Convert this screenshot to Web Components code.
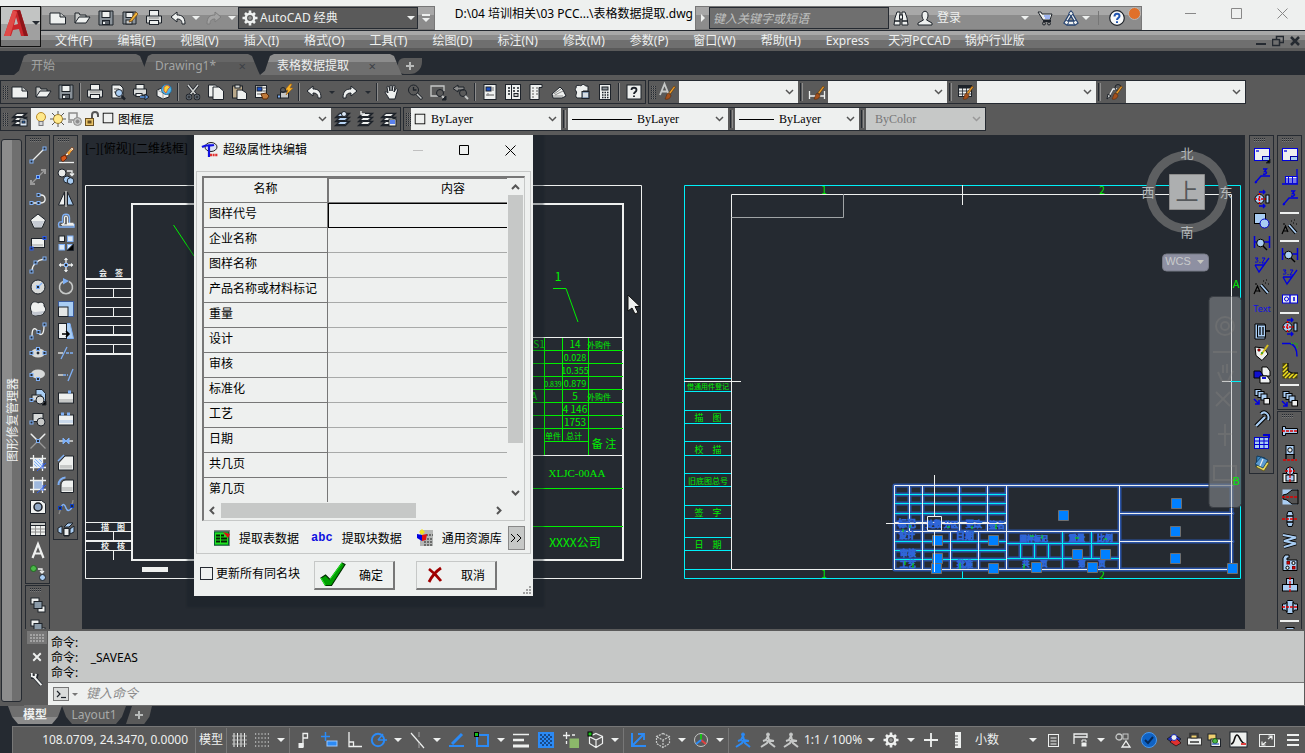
<!DOCTYPE html>
<html lang="zh-CN">
<head>
<meta charset="utf-8">
<title>表格数据提取.dwg</title>
<style>
html,body{margin:0;height:100%;overflow:hidden}
body{font:12px/16px "Noto Sans","Noto Sans CJK SC",sans-serif;color:#eef0ef;background:#5a5a5a}
</style>
</head>
<body>
<cad-app></cad-app>
<script>
const W='#eef0ef', D='#1d2229', B='#7fb0f5', S='#a9cdf3', U='#2a5cf0', R='#e00000', G='#8c8c8c';
const sq=(x,y,c=B)=>`<rect x="${x-1.5}" y="${y-1.5}" width="3" height="3" fill="#252a31" stroke="${c}"/>`;
const ln=(d,c=W,w=1.3,x='')=>`<path d="${d}" fill="none" stroke="${c}" stroke-width="${w}" ${x}/>`;
const sh=(d,f=W,s=D,w=1)=>`<path d="${d}" fill="${f}" stroke="${s}" stroke-width="${w}"/>`;
const ci=(x,y,r,f='none',s=D,w=1)=>`<circle cx="${x}" cy="${y}" r="${r}" fill="${f}" stroke="${s}" stroke-width="${w}"/>`;
const rc=(x,y,w,h,f=W,s=D)=>`<rect x="${x}" y="${y}" width="${w}" height="${h}" fill="${f}" stroke="${s}"/>`;
const brush=sh('M15.500 3l-5 7-1.500-1.500 5-6.500z','#e89a2a','#5a3208',.6)+sh('M5 15c1-1 1-4 3-6l3 2c0 3-3 5-6 4z','#a4501c','#5a2a08',.6);
const stack=ln('M5 3h8l-3 3H2zM5 7h8l-3 3H2zM5 11h8l-3 3H2z',D,2.6)+sh('M5 2.500h8l-3 3H2z')+sh('M5 6.500h8l-3 3H2z')+sh('M5 10.500h8l-3 3H2z');
const person=(c)=>ci(8,2.5,1.500,c,c)+ln('M8 4l1 4 5 1M8 4L6 8 3 9M8 8l-1 3-6 4M8 8l2 3 5 4',c,2);
const ICONS={
 new:sh('M0 3h10l5.500 4v7H0z')+sh('M10 3v4h5','#c6c8c7'),
 open:sh('M1 13V3h4l1 2h6v3','#c6c8c7')+sh('M1 13l4-6h11l-4 6z'),
 save:sh('M1 1h14v14H1z','#8a9299')+rc(4,1.5,8,6)+rc(4.500,10.500,7,4,'#5b6168')+ln('M6 12v2',W,2),
 saveas:sh('M1 2h13v12H1z','#8a9299')+rc(4,2.500,7,5)+rc(4,10,6,4,'#c6c8c7')+sh('M8 10l6-8 2 2-6 7-3 1z','#f2b63a','#7a4a10',.8),
 print:rc(3.500,.500,9,6)+sh('M.500 6h15v7H.500z','#d8dad9')+rc(3.500,10.500,9,4)+ln('M3 8h10',G,1),
 preview:sh('M2 1h8l3 3v10H2z')+ln('M4 5h5M4 8h3',G)+ci(9,9,3.500,S)+ln('M11.500 12l3.500 3.500',D,2.500),
 plot:rc(3,.500,8,5)+sh('M.500 5h13v6H.500z','#d8dad9')+rc(3,9.500,6,3)+ln('M7 13h7',D,3)+ln('M7 13h6','#5f9be8',1.500)+sh('M12 10l4 3-4 3z','#5f9be8'),
 globe:sh('M1 6l5-2 7 4v5l-6 2-6-3z')+ln('M1 6l6 3v6M7 9l6-1',G,.8)+ci(10.5,5.5,5,'#4db3e6','#2a6a96')+sh('M8 3l3-2 3 2-2 2-2 4-2-2z','#f2d43a','#e04a2a',.8),
 cut:ln('M3 1l8 10M13 1L5 11',D,3)+ln('M3 1l8 10M13 1L5 11','#d0d2d1',1.500)+ci(4,13,2,'none',D,2.500)+ci(12,13,2,'none',D,2.500)+ci(4,13,2,'none','#6f7780',1)+ci(12,13,2,'none','#6f7780',1),
 copy:sh('M.500 1h7l3 3v9H.500z')+sh('M5 3h6l4.500 4v8.500H5z'),
 paste:rc(1.500,2,10,12,'#b9a88a')+rc(4,1,5,3,'#d8dad9')+sh('M6 6h5l4.500 3v6.500H6z'),
 match:rc(1.500,1.500,11,12)+rc(3,3,5,4,'#1d4fc0')+ln('M9 4h3M9 7h3M3 10h5',G)+sh('M7 10l5-1 3 3-2 3H9z','#c07a3a','#5a2a08'),
 blockedit:rc(3.500,8,8,6,'#c6c8c7')+rc(.500,11,3,3,'#7fb0f5')+sh('M13 0L8 6h3l-2 5 7-7h-3l2-4z','#f7b42a','#a06010',.6)+ci(6,6,2.500),
 undo:sh('M7 2v3c5 0 8 2 8 9h-3c0-4-2-5-5-5v3L1 7z'),
 redo:sh('M9 2v3C4 5 1 7 1 14h3c0-4 2-5 5-5v3l6-5z'),
 redod:sh('M9 2v3C4 5 1 7 1 14h3c0-4 2-5 5-5v3l6-5z','#a3a3a3','#7d7d7d'),
 pan:sh('M5 15C4 12 1 9 1 8s2 0 3 1L3 3c0-1 1.500-1 2 0l1 4V2c0-1 2-1 2 0v5l1-5c0-1 2-1 2 0l-1 6 2-3c1-1 2 0 1.500 1L11 15z'),
 zoom:ci(6.500,6,5)+ln('M6.500 3v3h3',D)+ln('M10 10l5 5',D,3)+ln('M10 10l4.500 4.500','#c6c8c7',1.500),
 zoomwin:ln('M8 12H1V2h13v5','#c6c8c7')+ci(10,9,3.500)+ln('M12 12l3 3','#c6c8c7',2)+sh('M16 12v4h-4z',D),
 zoomprev:sh('M5 1L0 4.500 5 8V6h6V3H5z','#8c8c8c')+ci(10,9,3.500)+ln('M12 12l3 3','#c6c8c7',2),
 props:rc(2,.500,12,15)+rc(4,3,5,4,'#1d4fc0')+ln('M11 3v4M4 11h8M6 9v3',G),
 design:rc(.500,.500,6,15)+rc(6.500,.500,9,15)+ln('M3 4h2M3 7h2M3 10h2M8 4h2M12 4h2M8 7h2M12 7h2',D,1.6)+rc(9,9.500,4,3,'#c6c8c7'),
 palettes:sh('M2 .500h12v3h-3v12H2z')+ln('M4 4h2M8 4h2M4 7h2M8 7h2M4 10h2M8 10h2M4 13h2',G,1.6),
 sheets:sh('M1 10l8-7 3 3 3 6-4 2H2z')+ln('M3 10l7-5M4 11l8-4M2 12h10',G,1),
 markup:sh('M2 2c3-2 4 1 6-1s3 2 6 1v5H9v7H3c-3-3 1-4-1-7s1-2 0-5z')+rc(8,7.500,7,7,'#8aa0b8')+ln('M9 10h5M9 12h5',W),
 calc:rc(2.500,.500,11,15)+rc(5,3,6,3,'#8c9298')+ln('M5 8.500h1.500M7.500 8.500h1.500M10 8.500h1.500M5 11h1.500M7.500 11h1.500M10 11h1.500M5 13.500h1.500M7.500 13.500h1.500M10 13.500h1.500',D,1.500),
 help:rc(1,1,14,14)+ln('M5.500 6c0-3 5-3 5 0 0 2-2.500 2-2.500 4M8 11.500v1.500',D,1.800),
 textstyle:ln('M0 11L4.500 0 9 11M1.500 7.500h6','#c6c8c7',1.800)+brush,
 dimstyle:ln('M.500 7v8M15.500 7v8M1 12h14',W)+brush,
 tablestyle:rc(.500,1.500,13,11)+ln('M.500 3h13',D,3)+ln('M4.500 4v8M8.500 4v8M1 7h12M1 10h12',D,.8)+brush,
 leaderstyle:ln('M1 14l5-9h4',W)+ci(11,3.5,3)+sh('M0 15l1-5 3 2z','#c6c8c7')+brush,
 layers:stack+rc(8,8,7,7,'#dce9f7')+rc(10,10,3,2,'#2a7ae0'),
 laycur:stack.replace(/#eef0ef/g,'#b9d5f5')+ci(9,3,2.500,'#dce9f7'),
 layprev:stack+ln('M7 3H3V0',W),
 laystate:stack+rc(8,8,7,7)+ln('M9 10h5M9 12h5',U),
 bulb:ci(8,6,4.500,'#ffe98a','#b98a2a')+rc(6,10.500,4,4,'#d8dad9','#77777a'),
 sun:ln('M8 0v16M0 8h16M2 2l12 12M14 2L2 14','#555',1)+ci(8,8,4.500,'#ffe98a','#a08030'),
 vpsun:ln('M2 2h8v7H2zM5 11H1','#8c8c8c',1.500)+ci(10.500,10.500,4,'#c6c8c7',G)+ci(10.500,10.500,1.500,G,G),
 unlock:rc(1.500,7.500,8,7,'#e8c46a','#6a5020')+ln('M8 7V4c0-4 6-4 6 0v2','#555',2)+rc(4,10,3,2,'#6a5020','#6a5020'),
 swatch:rc(2.500,2.500,11,11,W,'#000'),
 gear:`<path d="M8 .500v15M.500 8h15M3 3l10 10M13 3L3 13" stroke="#eef0ef" stroke-width="2.600"/>`+ci(8,8,4.200,'#5a5a5a',W,2.500)+ci(8,8,1.200,'#5a5a5a',W,.5),
 binoc:sh('M2 8l2-6h3v13H1zM14 8l-2-6H9v13h6z')+rc(6.500,5,3,4)+ln('M1 11h6M9 11h6',D),
 user:sh('M5 5c0-5 6-5 6 0 0 3-1 4-1.500 5L15 13v2H1v-2l5.500-3C6 9 5 8 5 5z'),
 cart:sh('M1 2h3l1 2h10l-2 6H6z')+ln('M6 11h8',D,2)+ci(7,13.500,1.500)+ci(12,13.500,1.500)+ln('M7 6h6M8 8h5',U,.8),
 tri:sh('M8 1l7 12-3 2H4l-3-2zM8 6l-3 5h6z',W,'#23406e',1.300)+ci(8,3.500,2,W,'#23406e')+ci(3.500,12.500,2,W,'#23406e')+ci(12.500,12.500,2,W,'#23406e'),
 helpc:ci(8,8,7.300,'#f8f9f9',D,1.200)+ln('M5.500 6.500c0-4 5-3.500 5-.5 0 2-2.500 2-2.500 4M8 11.200v1.800','#2054b0',2),
 line:ln('M2 14L14 2')+sq(1.5,14.5)+sq(14.5,1.5),
 xline:ln('M2 14L14 2','#9a9a9a',1.300)+ln('M1 11v4h4M11 1h4v4','#9a9a9a',2)+rc(6.500,6.500,3,3,'#1040c0',B),
 pline:ln('M3 12h8c6 0 5-8 0-8H8')+sq(1.5,12)+sq(8.5,12)+sq(8.5,4),
 polygon:sh('M8 1l7.500 6-3.500 8H4L.500 7z')+sh('M2 8h12l-2.500 6h-7z','#c6cbd4','none'),
 rect:rc(1.500,3.500,13,9)+rc(2,9,11,2.500,'#c6c8c7','none')+sq(1.5,13.5,U)+sq(14.5,3,U),
 arc:ln('M2 14C2 8 7 3 14 2')+sq(1.5,14.5)+sq(5.5,5.5)+sq(14.5,1.5),
 circle:ci(8,8,7,'#d8dad9')+ln('M8 8l4-4',B)+sq(8,8),
 revcloud:sh('M2 2c2-2 5-1 6 0 3-2 7 0 6 3 3 3 1 6 0 6 0 3-5 4-6 3-3 2-7 0-6-3-2-2-2-6 0-9z')+sh('M2 10c3 2 8 0 12 0 0 4-10 6-12 3z','#c3c8d0','none'),
 spline:ln('M2 13C2 3 6 5 8 9s6 4 6-6')+sq(1.5,14.5)+sq(8.5,9)+sq(14.5,1.5),
 ellipse:`<ellipse cx="8" cy="8" rx="7" ry="4.500" fill="#d8dad9"/>`+sq(1.5,8)+sq(14.5,8)+sq(8,4)+ci(8,8,1,D),
 elarc:`<ellipse cx="8" cy="7" rx="7" ry="4.500" fill="#d8dad9"/>`+sq(1.5,8)+sq(8,12),
 insert:sh('M6 .500h6l3.500 4v8H6z',S)+rc(2,6,9,6,'#d8dad9')+ci(10,11,4,'#d8dad9')+sq(1.5,11)+sh('M16 12v4h-4z','#000'),
 block:rc(3,2.500,10,8,'#d8dad9')+ci(11,11,4,'#c6c8c7')+sq(1.5,11.5),
 point:ln('M.500 .500l15 15M15.500 .500l-15 15','#9a9a9a')+ln('M9 7l6-6M1 1l6 6',W)+sq(8,8),
 hatch:rc(3.500,3.500,9,9,'#dce9f7')+ln('M4 9l4 4M4 6l7 7M5 4l8 8M9 4l4 4',B,1)+ln('M3.500 0v16M12.500 0v16M0 3.500h16M0 12.500h16')+ln('M7 16l9-8M13 8v6',U,1),
 gradient:rc(3.500,3.500,9,9,'#9fb8dc')+ln('M3.500 0v16M12.500 0v16M0 3.500h16M0 12.500h16')+ln('M7 16l9-8M13 8v6',U,1),
 region:sh('M.500 1.500h11l4 3v10H.500z')+ci(8,8,4,'#8fa6c4',D,1.500),
 table:rc(.500,1.500,15,13)+rc(.500,1.500,15,3,'#c6c8c7')+ln('M5.500 5v9M10.500 5v9M1 8h14M1 11h14',G,1),
 mtext:ln('M2.500 15L8 1l5.500 14M5 10.500h6',W,2.2),
 addsel:ci(3.5,3.5,3,'#4ab848','#226622')+ln('M8 4h4v4M10 6l2 2 2-2',W)+ci(12.5,12.5,3,S),
 order:rc(1,1,8,6)+rc(8,9,7,6)+rc(4,4.500,8,7,'#8a9aa8'),
 erase:ln('M1 15.500h15')+sh('M7 8l7-8 2 2-7 7z','#f0f0f0','#7a3a10',.8)+sh('M9 6l6-5-4 7z','#f2a02a','none')+sh('M3 10l4-2 2 3-3 3c-2 1-3 0-3-4z','#d8581a','#5a1a08',.8),
 copyobj:ci(4,4,4,'#e8eae9')+ci(9,10.5,3.500,S)+ci(12.5,12,3.3,S)+ln('M9 2h5v4M12 4.500l2 2 2-2',W),
 mirror:sh('M6.500 1v13H.500z')+sh('M9.500 1v13h6z',S)+ln('M8 0v16',W,1),
 offset:ln('M1 14h15V11.500H11.500V5c0-5-7-5-7 0v4C2 8.500 .500 9 .500 11.500z',B,1.400)+ln('M4 12h12M3.500 12c0-1 3-1 3-2.500V5c0-2.500 3-2.500 3 0v5.500h6'),
 array:rc(1,1,5.5,5.5)+rc(9.500,1,5.5,5.5,'#dce9f7',B)+rc(1,9.500,5.5,5.5,'#dce9f7',B)+rc(9.500,9.500,5.5,5.5,'#dce9f7',B)+sh('M15.500 9v6.500H9z','#000'),
 move:sh('M8 0l3 3.500H5zM8 16l3-3.500H5zM0 8l3.500-3v6zM16 8l-3.500-3v6z',W,D,.5)+ln('M8 3v3M8 10v3M3 8h3M10 8h3')+sq(8,8),
 rotate:ln('M5 2.500a6.500 6.500 0 1 0 6 0','#c6c8c7',1.600)+sh('M5 -1l6 3-6 3.500z',B,'none'),
 scale:rc(.500,.500,15,15,S,'#3a5a9a')+rc(.500,6,9.5,9.5,'#e4e6e5'),
 stretch:sh('M8 .500h4l3.500 15H8z',S,B)+rc(.500,.500,8,15)+ln('M4 11h7M8 8l3 3-3 3','#000',1.500),
 trim:ln('M0 8h5',W)+ln('M8 8h8',B,1.300,'stroke-dasharray="3 1"')+ln('M3 14L9 2',B),
 extend:ln('M0 8h5',W)+ln('M5 8h5',B,1.300,'stroke-dasharray="3 1"')+ln('M10 14l5-12',B),
 brkpt:rc(.5,4,15,10)+rc(1,10,14,3,'#c6c8c7','none')+rc(10,1.500,3,3,B,'none'),
 brk:rc(.5,4,15,10)+rc(1,9,14,3,'#c9d8ea','none')+rc(3,1.500,3,3,B,'none')+rc(9,1.500,3,3,B,'none'),
 join:ln('M1 8h14')+sh('M5 5l3 3-3 3zM11 5L8 8l3 3z',B,B),
 chamfer:sh('M7 1h8.500v14H.500V8z')+rc(2,10,12,3.500,'#c6c8c7','none')+ln('M0 6l6-6',B,1.500),
 fillet:sh('M8 3h7.500v12.500H3V9c0-4 2-6 5-6z')+rc(4,10,10.500,4,'#c6c8c7','none')+ln('M.500 8c0-4 3-7.500 7-7.500',B,2),
 blend:ln('M1 15c1-3 1-4 2-5M15 1c0 3-1 4-2 6',G,1.300)+ln('M3 9c2-6 4-3 5 0s4 4 6-1',B,1.500)+sq(2,9,'#1040c0')+sq(14,7,'#1040c0'),
 explode:sh('M0 7l4-2v8l-4-2zM6 6l4-4h5l-4 4zM6 8h5v7H6zM12 8l4-3v6l-4 2z',S)+rc(6,7.500,5,7),
 rsheet:rc(.500,1.500,15,12,W,'#0000e0')+rc(8.500,9.500,7,4,S,'#0000a0')+ln('M2 4h3','#0000e0')+sh('M16 12v4h-4z','#000'),
 rsheet2:rc(.500,1.500,15,12,W,'#0000e0')+rc(8.500,9.500,7,4,S,'#0000a0')+ln('M2 4h3','#0000e0'),
 rtable:ln('M15 0v15M0 15h16',"#0000e0",1.300)+rc(3.500,7.5,11.5,6.5,W,'#0000e0')+ln('M3 10h12M3 12h12M6.500 8v6M10.500 8v6','#0000e0',1),
 rleader:ln('M1 14l6-7h9M9 0h3.500l-2 2.500c3.500 0 2 3.500-1.500 2.500','#0000e0',1.400)+ci(2,13,1.200,'#0000e0','none'),
 wheels:ci(5.500,8,4.5,S,'#000',1)+ln('M5.500 2v12M1 8h14',R,1.5,'stroke-dasharray="2 1"')+rc(12,4,3,8,S,'#000')+ln('M5 1h5M5 15h5M9 -1l2 2-2 2M9 13l2 2-2 2',"#0000e0",1.300),
 shapes:rc(.500,.500,11,10,S,'#000')+ci(10.500,10.500,4.5,S,'#0000c0'),
 dimmag:ln('M.500 1v12M15.500 1v12M1 7h14','#0000e0',1.500)+ci(6.500,8,3.800,S,'#000')+ln('M9 11l4 4','#000',1.500),
 rough:ln('M1 8h9l5-7M1 8l4 7 5-7','#0000e0',1.300)+ln('M1 1h3l-1.500 2c3 0 1.500 3-1.500 2M6 5v1M8 1h3l-3 5h3','#0000e0',1),
 wand:ln('M7 6l7 8','#000',3.500)+ln('M7 6l7 8',S,1.800)+ln('M0 15l3.500-8 2.500 6M1 12h4M9 2h1M12 1h1M14 5h1M11 4h1M1 5h2','#000',1.200),
 rtext:'<text x="8" y="11" font-size="9" text-anchor="middle" fill="#1010e0">Text</text>',
 beam:sh('M1 1h10v3H6v9h5v3H1z',S,'#000')+rc(3.500,2,8,12,S,'#000')+ln('M6 4v8M9 4v8M11 8h5','#000',1.300),
 paint:sh('M1 2l9 1 4 6-6 6.500-6-5z',W,'#000')+ln('M7 10l7-10','#d8c020',2)+ci(5,5,1.300,R,'#000',.5)+ci(8,8,1,'#20a020','none'),
 blocks:sh('M8 0h5l3 4v5H8z',W,'#000')+sh('M0 4h6l3 4v3H0z','#1010d0','#000')+sh('M6 9h7l3 4v3H6z',W,'#000')+ln('M8 11h4',"#1010d0",2),
 cascade:rc(1,.500,6,6,S,'#000')+rc(4,2.500,6,6,S,'#000')+rc(7,5,6,6,S,'#000')+rc(10,9.500,5.5,5.5,W,'#000')+ln('M0 10l5 5M5 11v4H1','#0000e0',1.500),
 wrench:ln('M2 15l9-9','#000',4.5)+ln('M2 15l9-9',S,2.300)+ln('M7 3c4-4 9 1 7 6','#000',4)+ln('M7 3c4-4 9 1 7 6',S,2),
 rgrid:rc(.500,4.500,14,11,S,'#0000d0')+ln('M5.500 4v11M10 4v11M1 8h13M1 11.500h13','#0000d0',1)+ln('M9 2h6v3','#0000d0',2),
 book:sh('M3 1l8 2v11L2 12z','#3a86c0','#123a5a')+sh('M8 5l7 3-5 8-8-4z','#e8d860','#5a5210',.8)+sh('M7 2l7 3-5 8-8-4z','#5a9ad0','#123a5a',.8)+ln('M9 4l-3 7',W,1.2),
 tol:rc(.5,4,15,8,W,'#0000e0')+ln('M8 4v8M12 6v4','#0000e0',1.500)+ci(4.500,8,2,'none','#0000e0'),
 corner:ln('M0 2.500h8c4 1 7 4 7 13','#0000e0',1.400)+ln('M9 2.500h6v6','#18b018',1.300,'stroke-dasharray="1.500 1.500"'),
 hatchcor:sh('M.500 0h5v10h10v5.500h-15z','#4a4410','none')+ln('M1 5l4-4M1 9l5-5M1 13l5-5M3 15l5-5M7 15l5-5M11 15l4-4','#f0e020',1.600)+ln('M6 0v8l4 2h6','#000',1),
 bolt:sh('M.500 3.500h3v2h12v5h-12v2h-3z',S,'#000')+ln('M0 8h16',R,1.3,'stroke-dasharray="3 1"'),
 p1:rc(4,.500,8,9,S,'#000')+ci(8,5,2.2,W,'#000')+ln('M4 9v5M12 9v5','#000',1.300)+ln('M1 15h14',R,1.3,'stroke-dasharray="3 1"'),
 p2:rc(1,6.5,14,9,W,'#000')+rc(4,8,8,6,S,'#000')+ci(8,4,4,S,'#000')+ln('M8 0v16M3 4h10',R,1.3,'stroke-dasharray="3 1"'),
 p3:rc(.500,.500,15,15,S,'none')+sh('M5 5l5-4h6v14h-6l-5-4-4-1V6z','#555','#000')+ln('M0 8h16',R,1.3,'stroke-dasharray="3 1"'),
 p4:sh('M6 .500h4l1 3v9l-1 3H6l-1-3v-9z',S,'#000')+ln('M5 5h6M5 11h6','#000')+ln('M0 8h16',R,1.3,'stroke-dasharray="3 1"'),
 p5:ln('M1 2l13 2.500L2 8l12 2.500L2 14','#000',3.800)+ln('M1 2l13 2.500L2 8l12 2.500L2 14',S,2),
 p6:sh('M1 15.500V3l2-3h4v3H5v2h10v10.500z',S,'#000')+rc(5,6.500,2.5,2.5,R,'#800')+rc(10.500,11.500,2.5,2.5,R,'#800')+ci(11.500,8,1.600,W,'#000')+ci(5.500,12.800,1.600,W,'#000'),
 p7:rc(4.500,1.500,7,6,S,'#000')+rc(.500,7.500,15,6.5,S,'#000')+ln('M8 0v16',R,1.3,'stroke-dasharray="3 1"'),
 p8:sh('M.500 5h3l2-3.500h5l2 3.500h3v6h-3l-2 3.500h-5L3.500 11h-3z',S,'#000')+ln('M5 3v10M11 3v10','#000')+ln('M0 8h16',R,1.3,'stroke-dasharray="3 1"'),
 x:ln('M3 3l10 10M13 3L3 13',W,2.500), spanner:ln('M4 5l9 10',D,4)+ln('M2 2l1 4 4 0 1-4',D,4)+ln('M4 5l9 10',W,2.500)+ln('M2 1l0 4 4 1 1-4',W,2),
 prompt:rc(.500,1.500,15,13,'#dadcdb','#777')+ln('M4 5l3 3-3 3',D,1.2)+ln('M8 11.500h5',D,1.2),
 sgrid:ln('M3 1v14M6.500 1v14M10 1v14M13.500 1v14',W,1)+ln('M1 4h15M1 8h15M1 12h15','#c6c8c7',.8),
 sdots:ln('M1 2h15M1 6h15M1 10h15M1 14h15',W,1.200,'stroke-dasharray="1.200 2"'),
 infer:ln('M7 15V1.500h4.500V6H7',W,1.300)+rc(3,11.500,4,4,W,W),
 dyn:rc(6,9,10,5,'#2b8af5','#9cc8ff')+ln('M4.500 0v9M0 4.500h9','#2b8af5',1.500),
 ortho:ln('M3 0v14.500h13M3 10h4.500v4.500',W,1.300), polar:ci(7,8,6.2,'none','#2b8af5',2)+ln('M7 8h9M7 8l5-6','#2b8af5',1.500),
 iso:ln('M1 1l13 15',W,1.200)+ln('M9 0v5M9 11v5','#9a9a9a',1.200), otrack:ln('M0 14h15',"#2b8af5",2)+ln('M3 12L13 2',"#2b8af5",3),
 osnap:rc(3,3,11,11,'none','#2b8af5')+ln('M3 3h11v11H3z','#2b8af5',2)+rc(.500,.500,4,4,'#18c018','#000'),
 lwt:ln('M0 2.500h16',W,1.500)+ln('M0 8h11',W,2.500)+ln('M0 14h16',W,3), trans:rc(.500,.500,15,15,'#2b8af5','#2b8af5')+ln('M2 3h12M2 7h12M2 11h12','#174a8a',2,'stroke-dasharray="2 2"')+ln('M4 5h12M4 9h12M4 13h12','#174a8a',2,'stroke-dasharray="2 2"'),
 selc:rc(7,7,8.5,8.5,'#8cb86a','#8cb86a')+ln('M3.500 0v7M0 3.500h7M9 3h3M3.500 9v3',W,1.300),
 cube:ln('M8 1.500l6.500 3v7l-6.500 4-6.500-4v-7zM2 5l6 3 6-3M8 8v7',W,1.200)+rc(0,0,4,4,'#18c018','#000'),
 cube2:ln('M8 1.500l6.500 3v7l-6.500 4-6.500-4v-7zM2 5l6 3 6-3M8 8v7','#c6c8c7',1.200,'stroke-dasharray="2 1"'),
 ucs:ln('M2 1v13h14M2 14L13 3','#2b8af5',2)+ln('M8 2h6v6','#2b8af5',1.800), giz:ci(8,8,6.500,'none','#c6c8c7')+ln('M8 8V2',"#18c018",2)+ln('M8 8l5 4','#e04040',2)+ln('M8 8l-5 4','#2b8af5',2),
 annb:person('#2b8af5'), ann:person('#c6c8c7'),
 plus:ln('M8 1v14M1 8h14',W,1.800), ruler:rc(5.500,.500,5,15,W,W)+ln('M5 4h3M5 7h3M5 10h3M5 13h3','#5a5a5a',1),
 quick:rc(2.500,2.500,10,12,'none',W)+ln('M4.500 6h6M4.500 9h6M4.500 12h6',W,1), lockui:ln('M1 12V2h13v4M1 5h13',W,1.300)+rc(8,10,6,5,W,'#5a5a5a')+ln('M9 10V8h4v2',W,1),
 isol:ci(5,5,3,'none','#c6c8c7',1.300)+rc(9,2,5,5,'none','#c6c8c7')+ln('M8 15l4-6 4 6z',W,1.3), perf:ci(8,8,7.5,'#0f62c4','#4a9af0')+ln('M4 8l3 3 5-6','#052a5a',2),
 db:sh('M1 7l7-5 7 5-7 5z','#2030c0',D)+sh('M4 10l6 4 5-3-6-6z','#e03030','#000',.6)+ci(8,5.5,3,W,'#2030c0'),
 db2:rc(.500,6,14,7,W,'#333')+ln('M3 6V1.500h8V6M3 10h9','#333',1.500)+rc(4,3,6,3,'#f0d070','#333'),
 db3:rc(2,2,8,6,'#f0d070',D)+rc(5,7,9.5,7.5,W,D)+ci(9,9,2.5,'#4ab848','#206010')+ln('M6 12h7','#3060c0'),
 wave:rc(0,0,17,15,W,D)+ln('M1 12c4 0 3-9 6-9s3 9 9 9','#111',1.600)+ln('M11 12h5','#e04040',2),
 clean:rc(.500,2.500,15,12,'none',W)+ln('M9 7l4-3M9.500 4h3.500v3.500M7 10l-4 3M3 9.500v3.500h3.500',W,1.200), menu:ln('M2 3h12M2 8h12M2 13h12',W,2),
 logo:'<ellipse cx="9" cy="5" rx="6" ry="4.500" fill="#d8e0f4" stroke="#222"/><path d="M0 5c5-3 8-1 12-2M7 4v11" stroke="#1010e0" stroke-width="2.200" fill="none"/><path d="M8 13h8" stroke="#e03030" stroke-width="2.500" stroke-dasharray="2 .6"/>',
 xtab:rc(0,0,16,16,'#888','none')+rc(.500,2,14,13,'#20e020','#063')+ln('M2 5.500h4M7 5.500h3M2 8.500h4M7 8.500h6M2 11.500h4M7 11.500h6','#042004',2)+sh('M9 2l7 2-2 4z','#e01010','none'),
 lib:rc(3,0,13,16,'#b4b6b5','none')+ln('M9 5h7M7 9h9M7 12h9M7 15h9','#222',1.200,'stroke-dasharray="2 1"')+sh('M0 4l5 1v6l-5-3z','#0000e0','none')+sh('M5 5l5-1-1 6-4 1z','#e01010','none')+sh('M2 2l3-3 3 3-3 3z','#f0e020','none'),
 ok:sh('M0 10l3-2 3 3L14 0l2 1L7 15H3z','#00a000','#003000',.8)+ln('M0 10l3 5M6 11L14 0','#20f020',.8),
 no:ln('M2 2c4 3 9 8 12 12M14 1C8 5 5 9 2 15','#a00000',2.800)
};
const svg=(n,s=16)=>`<svg class="i" width="${s}" height="${s}" viewBox="0 0 16 16" aria-hidden="true" overflow="visible">${ICONS[n]||''}</svg>`;
const BASE=`*{box-sizing:border-box}button{font:inherit;color:inherit;background:none;border:0;padding:0;margin:0}svg{display:block;flex:none}a{color:inherit;text-decoration:none}.car{width:0;height:0;border:4px solid transparent;border-top-color:#eef0ef;border-bottom:0}`;
const define=(tag,fn)=>customElements.define(tag,class extends HTMLElement{
  connectedCallback(){if(this.shadowRoot)return;const r=this.attachShadow({mode:'open'});const t=document.createElement('template');const [css,html]=fn(this);t.innerHTML=`<style>${BASE}${css}</style>${html}`;r.append(t.content.cloneNode(true));}
});

/* Strip of icon buttons: "|" divider, "v" menu arrow */
const strip=(list)=>(list||'').trim().split(/\s+/).filter(Boolean).map(n=>n=='|'?'<hr>':n=='v'?'<button class="v" aria-label="v"><span class="car"></span></button>':`<button aria-label="${n}">${svg(n)}</button>`).join('');
define('tool-bar',el=>[`
:host{display:flex;height:24px;border:1px solid #252a31;background:#5a5a5a;align-items:stretch;flex:none}
.grip{width:5px;margin:4px 0 4px 2px;background:repeating-linear-gradient(#5a5a5a 0 1px,transparent 1px 2px),repeating-linear-gradient(90deg,#252a31 0 1px,#777 1px 2px);flex:none}
button{width:23px;display:grid;place-items:center}.v{width:13px}.v .car{border-width:3px;border-bottom:0;border-top-color:#252a31}
hr{margin:2px 2px;border:0;width:2px;border-left:1px solid #252a31;border-right:1px solid #8c8c8c}`,
`<span class="grip"></span>${strip(el.getAttribute('icons'))}<slot></slot>`]);

define('tool-column',el=>[`
:host{display:flex;flex-direction:column;width:25px;border:1px solid #252a31;background:#5a5a5a;gap:2px;align-items:stretch;flex:none}
.grip{height:4px;margin:2px 7px 1px 3px;background:repeating-linear-gradient(90deg,#5a5a5a 0 1px,transparent 1px 2px),repeating-linear-gradient(#252a31 0 1px,#777 1px 2px);flex:none}
button{height:20px;display:grid;place-items:center;flex:none}hr{border:0;height:2px;background:#eef0ef;margin:1px 2px;flex:none}`,
`<span class="grip"></span>${strip(el.getAttribute('icons'))}`]);

define('style-select',el=>[`
:host{display:grid;width:var(--w);background:#eef0ef;color:#000;font-family:"Liberation Serif",serif;flex:none;align-items:center}
:host([disabled]){background:#c6c8c7;color:#777}
:host([sans]){font-family:"Noto Sans CJK SC",sans-serif}
select{grid-area:1/1;appearance:none;border:0;background:none;font:inherit;font-size:12px;color:inherit;width:100%;height:100%;padding:0 0 0 var(--p,8px);opacity:1}
.c{grid-area:1/1;justify-self:end;margin-right:4px;pointer-events:none}
.pre{grid-area:1/1;justify-self:start;display:flex;gap:1px;padding-left:2px;pointer-events:none}
.ln{height:1px;background:#000;margin-left:2px}`,
`<select aria-label="样式"${el.hasAttribute('disabled')?' disabled':''}><option>${el.getAttribute('value')||''}</option></select>
<span class="pre">${(el.getAttribute('icons')||'').split(' ').filter(Boolean).map(n=>n=='line'?`<span class="ln" style="width:${el.getAttribute('line')}px"></span>`:svg(n,n=='swatch'?14:16)).join('')}</span>
<svg class="c" width="9" height="6" viewBox="0 0 9 6"><path d="M1 1l3.500 3.500L8 1" fill="none" stroke="${el.hasAttribute('disabled')?'#999':'#555'}" stroke-width="1.500"/></svg>`]);

define('title-bar',()=>[`
:host{display:flex;height:30px;padding-left:41px;background:#eef0ef;color:#000;align-items:flex-start}
.band{display:flex;align-items:center;height:24px;margin-top:6px;border:1px solid #777;background:linear-gradient(#a8a8a8 8px,#8c8c8c 8px)}
.qat{width:394px;padding-left:4px;flex:none}.qat>button{width:24px;display:grid;place-items:center}.qat>.v{width:12px}
.ws{display:flex;align-items:center;width:180px;height:22px;background:#5a5a5a;border:1px solid #252a31;color:#eef0ef;padding:0 2px 0 3px;gap:2px;flex:none}
.ws select{flex:1;font:inherit;color:inherit;background:none;border:0;appearance:none;padding:0}
.qat>.more{width:15px;gap:2px}.more:before{content:"";width:8px;height:2px;background:#eef0ef}
h1{flex:1;min-width:0;margin:5px 2px 0 0;text-align:right;font:inherit;line-height:18px;white-space:nowrap}
.srch{width:447px;flex:none}.srch>button{display:grid;place-items:center}
.srch>.tri{width:13px}.tri:before{content:"";border:4px solid transparent;border-left-color:#eef0ef;border-right:0}
input{width:180px;height:22px;background:#6f6f6f;border:1px solid #252a31;color:#eef0ef;font:italic 12px/16px "Noto Sans CJK SC",sans-serif;padding:0 3px 2px}
input::placeholder{color:#c0c2c1;opacity:1}
.win{display:flex;width:163px;padding-left:26px;flex:none}.win button{width:46px;height:26px;display:grid;place-items:center}
.dot{width:13px;height:13px;border-radius:50%;background:#e0702a;border:1px solid #b8b8b8;align-self:flex-start;margin-left:1px}
.srch>.login{color:#eef0ef;width:84px;justify-items:start}.sep{width:1px;height:14px;background:#777;margin:0 8px}`,
`<div class="band qat">${['new','open','save','saveas','print','undo'].map(n=>`<button aria-label="${n}">${svg(n)}</button>`).join('')}<button class="v" aria-label="v"><span class="car"></span></button><button aria-label="redo">${svg('redod')}</button><button class="v" aria-label="v"><span class="car"></span></button>
<label class="ws">${svg('gear')}<select aria-label="工作空间"><option>AutoCAD 经典</option></select><span class="car"></span></label><button class="more" aria-label="more"><span class="car"></span></button></div>
<h1>D:\\04 培训相关\\03 PCC...\\表格数据提取.dwg</h1>
<div class="band srch"><button class="tri" aria-label="search"></button><input placeholder="键入关键字或短语" aria-label="搜索"><button style="width:24px" aria-label="find">${svg('binoc')}</button><button style="width:24px" aria-label="user">${svg('user')}</button><button class="login">登录</button><button style="width:8px" aria-label="v"><span class="car"></span></button><button style="width:32px" aria-label="cart">${svg('cart')}</button><button style="width:20px" aria-label="a360">${svg('tri')}</button><button style="width:9px" aria-label="v"><span class="car"></span></button><span class="sep"></span><button style="width:20px" aria-label="help">${svg('helpc')}</button><span class="dot"></span></div>
<div class="win"><button aria-label="最小化"><svg width="11" height="11"><path d="M0 5.500h11" stroke="#888"/></svg></button><button aria-label="最大化"><svg width="11" height="11"><path d="M.5.5h10v10H.5z" fill="none" stroke="#888"/></svg></button><button aria-label="关闭"><svg width="11" height="11"><path d="M.5.500l10 10M10.500.500l-10 10" stroke="#888"/></svg></button></div>`]);

define('menu-bar',()=>[`
:host{display:flex;height:21px;border-top:1px solid #252a31;padding-left:42px;background:linear-gradient(#a8a8a8 4px,#8c8c8c 4px 9px,#6f6f6f 9px 17px,#5a5a5a 17px);align-items:stretch}
nav{display:flex;flex:1}nav a{padding:0 12px 0 13px;line-height:20px;white-space:nowrap}nav a.ext{padding:0 7px}
.w{display:flex;gap:6px;align-items:center;padding-right:5px}`,
`<nav>${['文件(F)','编辑(E)','视图(V)','插入(I)','格式(O)','工具(T)','绘图(D)','标注(N)','修改(M)','参数(P)','窗口(W)','帮助(H)','Express'].map(t=>`<a href="#">${t}</a>`).join('')}<a class="ext" href="#">天河PCCAD</a><a class="ext" href="#">锅炉行业版</a></nav>
<span class="w"><button aria-label="最小化"><svg width="10" height="12"><path d="M0 9h10" stroke="#252a31" stroke-width="2"/></svg></button><button aria-label="还原"><svg width="12" height="12"><path d="M4.500 4V1.500h7v6H8M.5 4.500h7v6h-7z" fill="none" stroke="#252a31" stroke-width="1.500"/></svg></button><button aria-label="关闭"><svg width="10" height="12"><path d="M1 2l8 8M9 2l-8 8" stroke="#252a31" stroke-width="2.500"/></svg></button></span>`]);

define('app-button',()=>[`
:host{position:absolute;left:0;top:6px;width:41px;height:41px}
button{display:flex;width:41px;height:41px;border:1px solid #111;background:linear-gradient(#c2c4c3 17px,#a0a0a0 17px 33px,#777 33px);align-items:center;padding:0 2px 8px 3px;gap:2px}.car{border-top-color:#252a31}`,
`<button aria-label="A"><svg width="26" height="28" viewBox="0 0 26 28"><path d="M9 1h7l8 26h-7l-2-7-6 1-2 6H0z" fill="#c9252b"/><path d="M12 8l2 7-4 1z" fill="#b8bab9"/><path d="M9 1l4 2-7 24H0z" fill="#e04a48"/><path d="M13 2l3-1 8 26h-4z" fill="#8e1519"/></svg><span class="car"></span></button>`]);

define('file-tabs',()=>[`
:host{display:flex;height:24px;background:#252a31;padding:3px 0 0 14px;align-items:stretch}
.t{display:flex;align-items:center;justify-content:space-between;padding:2px 10px 0 17px;background:linear-gradient(#666 8px,#5a5a5a 8px);color:#a3a5a4;clip-path:polygon(0 100%,5px 80%,10px 10%,14px 0,calc(100% - 12px) 0,calc(100% - 8px) 10%,calc(100% - 2px) 80%,100% 100%);flex:none}
.t.on{background:linear-gradient(#8c8c8c 8px,#6f6f6f 8px);color:#eef0ef;padding-right:22px}
.x{color:#3c4046;font-size:13px;margin-right:4px}
.add{width:24px;height:16px;margin:4px 0 0 -4px;border-radius:6px 0 12px 6px;background:#5a5a5a;display:grid;place-items:center}`,
`<div class="t" style="width:134px"><a href="#">开始</a></div><div class="t" style="width:122px;margin-left:-10px"><a href="#">Drawing1*</a><span class="x">×</span></div><div class="t on" style="width:142px"><a href="#">表格数据提取</a><span class="x">×</span></div><button class="add" aria-label="新建"><svg width="10" height="10"><path d="M5 1v8M1 5h8" stroke="#b8bab9" stroke-width="2"/></svg></button>`]);

define('tool-rows',()=>[`
:host{display:flex;flex-direction:column;gap:3px;padding:5px 0 4px;background:#5a5a5a}
.r{display:flex;gap:2px}
.ic{width:23px;display:grid;place-items:center;flex:none}
hr{margin:2px;width:3px;border:0;border-left:1px solid #252a31;border-right:1px solid #8c8c8c;flex:none}`,
`<div class="r"><tool-bar icons="new open save | print preview plot globe | cut copy paste match blockedit | undo v redo v | pan zoom zoomwin zoomprev | props design palettes sheets markup calc | help"></tool-bar>
<tool-bar>${['textstyle','dimstyle','tablestyle','leaderstyle'].map((n,i)=>`${i?'<hr>':''}<button class="ic" aria-label="${n}">${svg(n)}</button><style-select style="--w:119px"></style-select>`).join('')}</tool-bar></div>
<div class="r"><tool-bar icons="layers"><style-select sans value="图框层" icons="bulb sun vpsun unlock swatch" style="--w:300px;--p:87px"></style-select>${['laycur','layprev','laystate'].map(n=>`<button class="ic" aria-label="${n}">${svg(n)}</button>`).join('')}</tool-bar>
<tool-bar><style-select value="ByLayer" icons="swatch" style="--w:150px;--p:20px"></style-select><hr><style-select value="ByLayer" icons="line" line="60" style="--w:160px;--p:69px"></style-select><hr><style-select value="ByLayer" icons="line" line="35" style="--w:124px;--p:44px"></style-select><hr><style-select value="ByColor" disabled style="--w:119px;--p:9px"></style-select></tool-bar></div>`]);

/* ---- drawing ---- */
const T=(x,y,s,t,c='g')=>`<text class="t${c}" x="${x}" y="${y}" font-size="${s}">${t}</text>`;
const block=()=>{
 const w=[[894,485,1232,485],[894,522,1006,522],[894,531,1119,531],[894,569,1232,569],[1119,513,1232,513],[1119,541,1232,541],[894,485,894,569],[909,485,909,531],[922,485,922,569],[959,485,959,531],[987,485,987,531],[1006,485,1006,569],[1119,485,1119,569],[1231,485,1231,569],[950,531,950,569],[978,531,978,569]];
 const c=[[894,494,1006,494],[894,503,1006,503],[894,513,1006,513],[894,541,1006,541],[894,550,1006,550],[894,559,1006,559],[1006,543,1119,543],[1006,558,1119,558],[1020,543,1020,558],[1034,543,1034,558],[1048,543,1048,558],[1062,531,1062,569],[1091,531,1091,558]];
 const p=a=>a.map(([x,y,z,v])=>`M${x+.5} ${y+.5}L${z+.5} ${v+.5}`).join('');
 return `<path d="${p(w)+p(c)}" stroke="#2a52a4" stroke-width="4" fill="none" stroke-linecap="round"/><path class="c" d="${p(c)}"/><path class="w" d="${p(w)}"/>`;
};
const grips=[[1063,515],[1176,503],[1175,531],[1175,558],[1232,568],[937,540],[993,540],[937,558],[936,568],[993,568],[1077,554],[1105,554],[1036,567],[1092,567]];
define('cad-canvas',()=>[`
:host{display:block;background:#252a31;overflow:hidden;position:relative;flex:1;min-width:0}
svg{width:100%;height:100%;font-family:"Noto Sans CJK SC",sans-serif}
.w,.c,.g,.h,.k{fill:none;stroke:#eef0ef;stroke-width:1}.c{stroke:#00f0f8}.g{stroke:#00f000}.h{stroke-width:2}.k{stroke:#a0a4a6}
text{text-anchor:middle}.tg{fill:#00f000}.tw{fill:#eef0ef;font-weight:700}.ts{fill:#3f83f0;stroke:#2f66d8;stroke-width:1}.tv{fill:#b4b8ba}.tb{fill:#000;text-anchor:start}
slot{display:block;position:absolute;left:112px;top:0}`,
`<svg aria-label="绘图"><g transform="translate(-82 -135)">
${T(85,153,12,'[−][俯视][二维线框]','b')}
<path class="w" d="M85.500 185.500H641.500V578.500H85.500z"/><path class="h" d="M132 204H623V560H132z"/>
<path class="w" d="M86 288.500H132M86 297.500H132M86 307.500H132M86 316.500H132M86 325.500H132M86 344.500H132M113.500 288V297M113.500 307V316M113.500 325V335M113.500 344V354M86 522.500H132M86 531.500H132M86 550.500H132M113.500 531V541M113.500 550V560"/>
<path class="h" d="M86 279H132M86 335H132M86 354H132M86 541H132"/>
${T(103,276,8,'会','w')+T(119,276,8,'签','w')+T(105,530,8,'描','w')+T(121,530,8,'图','w')+T(105,549,8,'校','w')+T(121,549,8,'核','w')}
<path d="M142 567h26v5h-26z" fill="#eef0ef"/>
<path class="g" d="M173.500 225L194 256M553 288.500H566L578 322M533 350.500H623M533 363.500H623M533 376.500H623M533 389.500H623M533 402.500H623M533 415.500H623M533 428.500H623M544 441.500H588M533 488.500H623M533 526.500H623M544.500 337V455M562.500 337V441M588.500 337V455"/>
<path class="w" d="M533 337.500H623M533 455.500H623"/>
${T(558,281,12,'1')+T(539,348,10,'S1')+T(575,348,10,'14')+T(599,348,8,'外购件')+T(575,361,9,'0.028')+T(575,374,9,'10.355')+T(553,387,7,'0.839')+T(575,387,9,'0.879')+T(575,400,10,'5')+T(599,400,8,'外购件')+T(534,400,10,'A')+T(575,413,10,'4 146')+T(575,426,10,'1753')+T(553,439,8,'单件')+T(574,439,8,'总计')+T(604,448,11,'备 注')}
<text class="tg" x="577" y="477" font-size="11" font-family="Liberation Serif">XLJC-00AA</text>${T(575,547,12,'XXXX公司')}
<path class="c" d="M684.500 185.500H1240.500V578.500H684.500zM684 378.500H731M684 391.500H731M684 410.500H731M684 423.500H731M684 441.500H731M684 455.500H731M684 473.500H731M684 486.500H731M684 505.500H731M684 518.500H731M684 537.500H731M684 550.500H731M684 569.500H731M962.500 185V195M962.500 569V578M1231 381.500H1241"/>
<path class="w" d="M731.500 194.500H1231.500V569.500H731.500zM684 381.500H741M962.500 185V205M1222 381.500H1231"/><path class="k" d="M731.500 217.500H843.500V194"/>
${T(708,389,7,'借通用件登记')+T(708,421,9,'描　图')+T(708,453,9,'校　描')+T(708,484,8,'旧底图总号')+T(708,516,9,'签　字')+T(708,548,9,'日　期')}
${T(824,194,10,'1')+T(1102,194,10,'2')+T(824,578,10,'1')+T(1102,579,10,'2')+T(1236,288,11,'A')}
${block()}
${T(907,527,9,'标记','s')+T(934,527,8,'处数','s')+T(951,527,7,'分区','s')+T(974,527,8,'更改','s')+T(997,528,8,'签名','s')+T(907,538,8,'设计','s')+T(965,539,9,'日期','s')+T(908,556,8,'审核','s')+T(908,567,8,'工艺','s')+T(965,567,8,'批准','s')+T(1034,541,7,'图样标记','s')+T(1077,541,8,'重量','s')+T(1105,541,8,'比例','s')+T(1026,566,7,'共','s')+T(1044,566,7,'页','s')+T(1082,566,7,'第','s')+T(1102,566,7,'页','s')}
<path class="g" d="M903 529v3M910 525v3M913 568v-5M905 565v-4M947 527h3M972 526v3M996 529v-5M960 563v6M1024 564v5M1030 536h4M1042 539v-4M1075 538h4M1104 539h3" stroke-width="1.500"/>
${grips.map(([x,y])=>`<path d="M${x-4.500} ${y-4.500}h10v10h-10z" fill="#0080ff" stroke="#6f6f6f"/>`).join('')}
<path class="w" d="M934.500 475V516M934.500 531V572M886 523.500H927M942 523.500H1006M927.500 516.500h14v14h-14z"/>
<circle cx="1187" cy="192" r="36.500" fill="none" stroke="#5d5f61" stroke-width="9"/><path d="M1169.500 174.500h35v35h-35z" fill="#adafb0" stroke="#8c8c8c"/>
<text x="1187" y="200" font-size="23" fill="#55585b">上</text>
${T(1187,158,13,'北','v')+T(1187,237,13,'南','v')+T(1148,197,13,'西','v')+T(1226,197,13,'东','v')}
<rect x="1162.500" y="254" width="46" height="17" rx="4" fill="#8e90a2" stroke="#777a86"/><text x="1178" y="265" font-size="11" fill="#c8cacb" font-family="Liberation Sans">WCS</text><path d="M1197 260h7l-3.500 4z" fill="#c8c8c0"/>
<rect x="1209" y="296.500" width="32" height="211" rx="4" fill="#777b80" fill-opacity=".72" stroke="#3a3e44"/>
<g fill="none" stroke="#6c6e70" stroke-width="2"><circle cx="1225" cy="326" r="9"/><circle cx="1225" cy="326" r="4"/><path d="M1213 352h24M1218 372l4 9h6l5-10M1223 373v-8M1227 373v-9M1216 392l14 14M1230 392l-14 14M1225 424v22M1218 434h14M1214 466h22v14h-22z"/></g>
<path class="w" d="M1231.500 296V508M1222 381.500H1231" opacity=".7"/><path class="c" d="M1231 381.500H1241"/>${T(1236,485,11,'B')}
<path d="M628 295v16l4-3 3 6 3-1.500-3-6h5z" fill="#eef0ef" stroke="#111"/>
</g></svg><slot></slot>`]);

define('attr-dialog',()=>[`
:host{display:flex;flex-direction:column;width:339px;height:461px;background:#eef0ef;color:#000;font-family:"Noto Sans CJK SC",sans-serif;box-shadow:2px 2px 2px 9px rgba(20,30,36,.35)}
header{display:flex;height:30px;align-items:center;padding-left:8px;flex:none}header b{font-weight:400;flex:1;margin-left:5px;padding-bottom:2px}header button{width:46px;height:28px;display:grid;place-items:center}
.g{margin:6px 2px 0;border:1px solid #c6c8c7;height:383px;padding:4px 5px 0 5px;flex:none}
.tb{display:grid;grid-template:324px 18px/303px 17px;border:2px solid #777;border-right:1px solid #c6c8c7;border-bottom:1px solid #c6c8c7;width:323px;height:345px}
.vp{overflow:hidden}
table{border-collapse:separate;border-spacing:0;table-layout:fixed;width:373px}
th,td{font-weight:400;height:25px;padding:0 0 4px 5px;text-align:left;border-bottom:1px solid #777;line-height:20px}td{border-color:#a8aaa9}
th:first-child{width:124px;border-right:1px solid #777}
thead th{text-align:center;padding:0 0 6px;line-height:17px}thead th+th{border-top:1px solid #777;border-left:1px solid #777}
tr.on td{border:1px solid #000}
.sv{display:flex;flex-direction:column;align-items:center;justify-content:space-between;padding:6px 0 6px}.sv i{width:15px;height:248px;background:#c6c8c7;margin-bottom:43px}
.sh{display:flex;align-items:center;justify-content:space-between;padding:0 5px 1px}.sh i{height:15px;width:195px;background:#c6c8c7;margin-right:74px}
.ex{display:flex;align-items:center;height:34px;padding-left:12px}.ex button{display:flex;align-items:center;gap:9px;white-space:nowrap}.ex button+button{margin-left:12px}
.ex .abc{font:bold 12px "Liberation Mono",monospace;color:#1010e0}.ex button.m{width:18px;height:24px;background:#c6c8c7;border:1px solid #888;justify-content:center;margin-left:6px}
footer{display:flex;align-items:center;flex:1;padding:0 0 0 6px}
label{display:flex;gap:3px;align-items:center;width:114px;padding-bottom:4px;white-space:nowrap}input{appearance:none;width:13px;height:13px;border:1px solid #252a31;margin:0;flex:none}
footer button{width:81px;height:29px;display:flex;align-items:center;justify-content:space-between;padding:0 10px 0 6px;border:1px solid #c6c8c7;border-right:2px solid #777;border-bottom:2px solid #777}footer button+button{margin-left:21px}
footer>svg{align-self:flex-end;margin:0 2px 2px auto}.pad{padding-left:4px}`,
`<header>${svg('logo')}<b>超级属性块编辑</b><button aria-label="最小化"><svg width="10" height="10"><path d="M0 5.500h10" stroke="#c0c0c0"/></svg></button><button aria-label="最大化"><svg width="11" height="11"><path d="M.5.500h9v9h-9z" fill="none" stroke="#000"/></svg></button><button aria-label="关闭"><svg width="11" height="11"><path d="M.5.500l10 10M10.500.500l-10 10" stroke="#000"/></svg></button></header>
<div class="g"><div class="tb"><div class="vp"><table><thead><tr><th>名称</th><th>内容</th></tr></thead><tbody>${['图样代号','企业名称','图样名称','产品名称或材料标记','重量','设计','审核','标准化','工艺','日期','共几页','第几页'].map((t,i)=>`<tr${i?'':' class="on"'}><th>${t}</th><td></td></tr>`).join('')}</tbody></table></div>
<div class="sv"><svg width="9" height="6"><path d="M1 5l3.500-3.500L8 5" fill="none" stroke="#555" stroke-width="2"/></svg><i></i><svg width="9" height="6"><path d="M1 1l3.500 3.500L8 1" fill="none" stroke="#555" stroke-width="2"/></svg></div>
<div class="sh"><svg width="6" height="9"><path d="M5 1L1.500 4.500 5 8" fill="none" stroke="#555" stroke-width="2"/></svg><i></i><svg width="6" height="9"><path d="M1 1l3.500 3.500L1 8" fill="none" stroke="#555" stroke-width="2"/></svg></div></div>
<div class="ex"><button>${svg('xtab')}提取表数据</button><button><span class="abc">abc</span>提取块数据</button><button style="margin-left:15px">${svg('lib')}通用资源库</button><button class="m" aria-label="more"><svg width="12" height="10"><path d="M1 1l4 4-4 4M7 1l4 4-4 4" fill="none" stroke="#000"/></svg></button></div></div>
<footer><label><input type="checkbox">更新所有同名块</label><button>${svg('ok',24)}确定</button><button><span class="pad">${svg('no')}</span>取消</button><svg width="8" height="8"><path d="M6 0h2v2H6zM3 3h2v2H3zM6 3h2v2H6zM0 6h2v2H0zM3 6h2v2H3zM6 6h2v2H6z" fill="#a0a0a0"/></svg></footer>`]);

define('side-palette',()=>[`
:host{display:block;width:24px;padding:4px 2px 4px 1px;background:#5a5a5a;flex:none}
div{height:100%;border:1px solid #252a31;border-radius:3px;background:linear-gradient(90deg,#8c8c8c 10px,#6f6f6f 10px);display:grid;place-items:center}
span{writing-mode:vertical-rl;text-orientation:sideways;transform:rotate(180deg);white-space:nowrap;font-family:"Noto Sans CJK SC",sans-serif}`,
`<div><span>图形修复管理器</span></div>`]);

define('command-line',()=>[`
:host{display:flex;height:77px;padding:2px 1px 0 2px;background:#5a5a5a;flex:none;border-bottom:1px solid #6f6f6f}
.h{width:22px;background:#5a5a5a;display:flex;flex-direction:column;align-items:center;gap:4px}
.d{width:20px;height:13px;background:repeating-linear-gradient(#777 0 1px,transparent 1px 3px),repeating-linear-gradient(90deg,#777 0 1px,#a3a3a3 1px 3px);border:2px solid #777}
.h button{height:18px;display:grid;place-items:center}
.m{flex:1;display:flex;flex-direction:column;min-width:0}
pre{margin:0;font:inherit;line-height:15px;color:#000;background:#c6c8c7;padding:4px 3px 0;flex:1;border-bottom:1px solid #777}
.in{display:flex;height:22px;background:#eef0ef;align-items:center;padding-left:5px;gap:3px;flex:none}
.in .car{border-width:3px;border-bottom:0;border-top-color:#777;margin-right:5px}
input{flex:1;border:0;background:none;font:italic 13px/16px "Noto Sans CJK SC",sans-serif;padding:0 0 2px;outline:0}input::placeholder{color:#8c8c8c;opacity:1}`,
`<div class="h"><span class="d"></span><button aria-label="关闭">${svg('x',12)}</button><button aria-label="自定义">${svg('spanner',14)}</button></div>
<div class="m"><pre>命令:
命令:    _SAVEAS
命令:</pre><div class="in">${svg('prompt')}<span class="car"></span><input placeholder="键入命令" aria-label="命令行"></div></div>`]);

define('layout-tabs',()=>[`
:host{display:flex;height:20px;background:#252a31;padding:0 0 2px 8px;flex:none}
a{display:grid;place-items:center;background:#5a5a5a;color:#a8aaa9;clip-path:polygon(0 0,100% 0,calc(100% - 4px) 60%,calc(100% - 10px) 100%,10px 100%,4px 60%)}
a.on{background:linear-gradient(#6f6f6f 11px,#8c8c8c 11px);color:#eef0ef;font-weight:700}
button{width:26px;background:#5a5a5a;clip-path:polygon(6px 0,100% 0,90% 60%,70% 100%,0 100%);display:grid;place-items:center}`,
`<a class="on" href="#" style="width:54px">模型</a><a href="#" style="width:64px">Layout1</a><button aria-label="新建布局"><svg width="8" height="8"><path d="M4 0v8M0 4h8" stroke="#b8bab9" stroke-width="2"/></svg></button>`]);

const cells=a=>a.split(' ').map(s=>{const[n,w]=s.split(':');return n=='|'?'<hr>':n=='v'?'<button class="v" aria-label="v"><span class="car"></span></button>':`<button style="width:${w}px" aria-label="${n}">${svg(n)}</button>`}).join('');
define('status-bar',()=>[`
:host{display:flex;height:27px;background:#252a31;padding-left:12px;flex:none}
div{display:flex;flex:1;background:#5a5a5a;border-top:1px solid #777;border-left:1px solid #777;align-items:center;min-width:0;overflow:hidden}
button,span.t{display:grid;place-items:center;height:25px;flex:none;white-space:nowrap}.v{width:14px}
hr{border:0;width:1px;height:25px;background:#777;margin:0 1px;flex:none}
div .co{width:181px;justify-items:end;padding-right:6px}.f{flex:1}`,
`<div><span class="t co">108.0709, 24.3470, 0.0000</span><hr><button style="width:28px">模型</button><hr>${cells('sgrid:22 sdots:24 v | infer:25 dyn:25 ortho:25 polar:25 v iso:25 v otrack:25 osnap:25 v lwt:25 trans:25 selc:25 cube:25 v | ucs:25 cube2:25 v giz:24 v | annb:26 ann:24 ann:22')}<button style="width:62px">1:1 / 100%</button>${cells('v gear:26 v plus:26 ruler:28')}<button style="width:30px">小数</button><span class="f"></span>${cells('v quick:28 lockui:26 v isol:28 perf:26 db:23 db2:19 db3:19 wave:30 clean:28 menu:24')}</div>`]);

define('cad-app',()=>[`
:host{display:flex;flex-direction:column;height:100vh;position:relative}
title-bar,menu-bar,file-tabs,tool-rows{flex:none}
.b{display:flex;flex:1;min-height:0}.c{display:flex;flex-direction:column;flex:1;min-width:0}
.w{display:flex;flex:1;min-height:0;overflow:hidden;background:#5a5a5a}
.p{display:flex;gap:3px;padding:0 4px 0 1px;align-items:flex-start;flex:none}.p.r{padding:0 3px 0 4px}.s{display:flex;flex-direction:column;gap:1px}`,
`<title-bar></title-bar><menu-bar></menu-bar><app-button></app-button><file-tabs></file-tabs><tool-rows></tool-rows>
<div class="b"><side-palette></side-palette><div class="c"><div class="w">
<div class="p"><div class="s"><tool-column icons="line xline pline polygon rect arc circle revcloud spline ellipse elarc insert block point hatch gradient region table mtext addsel"></tool-column><tool-column icons="order order order"></tool-column></div>
<tool-column icons="erase copyobj mirror offset array move rotate scale stretch trim extend brkpt brk join chamfer fillet blend explode"></tool-column></div>
<cad-canvas><attr-dialog></attr-dialog></cad-canvas>
<div class="p r"><tool-column icons="rsheet rleader wheels shapes dimmag rough wand rtext beam paint blocks cascade wrench rgrid book"></tool-column>
<div class="s"><tool-column icons="rsheet2 rtable rleader | wand | dimmag rough tol | wheels corner hatchcor | cascade"></tool-column><tool-column icons="bolt p1 p2 p3 p4 p5 p6 p7 p8 | p1"></tool-column></div></div>
</div><command-line></command-line></div></div><layout-tabs></layout-tabs><status-bar></status-bar>`]);
</script>
</body>
</html>
